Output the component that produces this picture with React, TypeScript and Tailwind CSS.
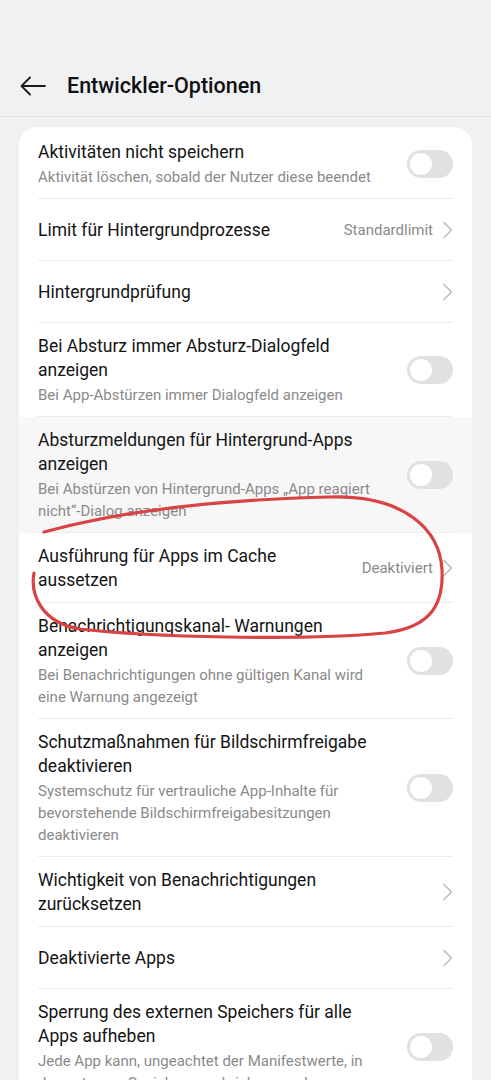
import React from "react";

type Row = {
  title: string;
  sub?: string;
  right: "toggle" | "chevron";
  value?: string;
  pressed?: boolean;
};

const rows: Row[] = [
  { title: "Aktivitäten nicht speichern", sub: "Aktivität löschen, sobald der Nutzer diese beendet", right: "toggle" },
  { title: "Limit für Hintergrundprozesse", right: "chevron", value: "Standardlimit" },
  { title: "Hintergrundprüfung", right: "chevron" },
  { title: "Bei Absturz immer Absturz-Dialogfeld anzeigen", sub: "Bei App-Abstürzen immer Dialogfeld anzeigen", right: "toggle" },
  {
    title: "Absturzmeldungen für Hintergrund-Apps anzeigen",
    sub: "Bei Abstürzen von Hintergrund-Apps „App reagiert nicht“-Dialog anzeigen",
    right: "toggle",
    pressed: true,
  },
  { title: "Ausführung für Apps im Cache aussetzen", right: "chevron", value: "Deaktiviert" },
  {
    title: "Benachrichtigungskanal- Warnungen anzeigen",
    sub: "Bei Benachrichtigungen ohne gültigen Kanal wird eine Warnung angezeigt",
    right: "toggle",
  },
  {
    title: "Schutzmaßnahmen für Bildschirmfreigabe deaktivieren",
    sub: "Systemschutz für vertrauliche App-Inhalte für bevorstehende Bildschirmfreigabesitzungen deaktivieren",
    right: "toggle",
  },
  { title: "Wichtigkeit von Benachrichtigungen zurücksetzen", right: "chevron" },
  { title: "Deaktivierte Apps", right: "chevron" },
  {
    title: "Sperrung des externen Speichers für alle Apps aufheben",
    sub: "Jede App kann, ungeachtet der Manifestwerte, in den externen Speicher geschrieben werden",
    right: "toggle",
  },
];

function Toggle() {
  return (
    <div className="flex h-[28px] w-[46px] shrink-0 items-center rounded-full bg-[#e1e1e1] px-[3px]">
      <div className="h-[22px] w-[22px] rounded-full bg-white" />
    </div>
  );
}

function Chevron() {
  return (
    <svg width="12" height="20" viewBox="0 0 12 20" className="shrink-0">
      <path d="M3 2.5 L10.5 10 L3 17.5" fill="none" stroke="#b8b8b8" strokeWidth="1.4" strokeLinecap="round" strokeLinejoin="round" />
    </svg>
  );
}

function SettingRow({ row, first, last }: { row: Row; first: boolean; last: boolean }) {
  return (
    <div className={row.pressed ? "bg-[#f7f7f7] px-[19px]" : "px-[19px]"}>
      <div
        className={
          "flex min-h-[62px] items-center justify-between gap-[16px] pb-[10px] " +
          (first ? "pt-[13px] " : "pt-[11px] ") +
          (last ? "" : "border-b border-[#ececec]")
        }
      >
        <div className="min-w-0 max-w-[347px] flex-1">
          <div className="text-[17.5px] leading-6 text-[#141414]">{row.title}</div>
          {row.sub && <div className="mt-[2px] text-[15px] leading-[22px] text-[#8a8a8a]">{row.sub}</div>}
        </div>
        {row.right === "toggle" ? (
          <Toggle />
        ) : (
          <div className="flex shrink-0 items-center gap-[8px]">
            {row.value && <span className="text-[15px] text-[#8a8a8a]">{row.value}</span>}
            <Chevron />
          </div>
        )}
      </div>
    </div>
  );
}

export default function App() {
  return (
    <div className="relative min-h-[1080px] w-[491px] overflow-hidden bg-[#f0f1f3] font-['Roboto',sans-serif]">
      <div className="h-[117px] border-b border-[#e2e3e5] pt-[60px]">
        <div className="flex h-[52px] items-center">
          <svg width="28" height="24" viewBox="0 0 28 24" className="ml-[19px]">
            <path d="M26 12 H3 M11 3.5 L2.5 12 L11 20.5" fill="none" stroke="#1c1c1c" strokeWidth="1.8" strokeLinecap="round" strokeLinejoin="round" />
          </svg>
          <h1 className="ml-[20px] text-[21.5px] font-medium text-[#111]">Entwickler-Optionen</h1>
        </div>
      </div>

      <div className="mx-[19px] mt-[10px] overflow-hidden rounded-[18px] bg-white">
        {rows.map((r, i) => (
          <SettingRow key={i} row={r} first={i === 0} last={i === rows.length - 1} />
        ))}
      </div>

      <svg className="pointer-events-none absolute left-0 top-0" width="491" height="1080" viewBox="0 0 491 1080">
        <path
          d="M44 532 C 110 514, 200 500, 330 497 C 405 495, 440 530, 442 570 C 444 610, 425 628, 385 633 C 300 641, 150 637, 80 629 C 42 623, 30 595, 34 573"
          fill="none"
          stroke="#d84444"
          strokeWidth="3.2"
          strokeLinecap="round"
        />
      </svg>
    </div>
  );
}
